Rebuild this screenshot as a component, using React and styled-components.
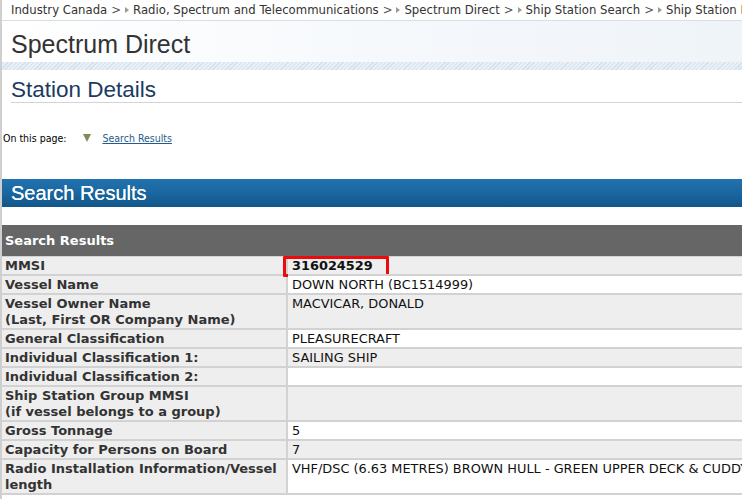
import React from "react";
import styled, { createGlobalStyle } from "styled-components";

const Global = createGlobalStyle`
  html, body { margin: 0; padding: 0; background: #fff; overflow: hidden; }
  body { width: 742px; height: 499px; }
`;

const Page = styled.div`
  width: 820px;
  border-left: 2px solid #cfcfcf;
  min-height: 499px;
  box-sizing: border-box;
`;

const Breadcrumb = styled.nav`
  height: 20px;
  padding-left: 9px;
  display: flex;
  align-items: center;
  gap: 4px;
  font-family: "DejaVu Sans", Verdana, sans-serif;
  font-size: 11.7px;
  color: #333;
  white-space: nowrap;
  border-bottom: 1px solid #d6dee8;
`;

const Crumb = styled.span``;

const Sep = styled.span`
  display: inline-flex;
  align-items: center;
  gap: 4px;
  color: #555;
`;

const Chevron = styled.span`
  display: inline-block;
  width: 0;
  height: 0;
  border-top: 3px solid transparent;
  border-bottom: 3px solid transparent;
  border-left: 4px solid #9a9a9a;
`;

const Banner = styled.header`
  height: 41px;
  box-sizing: border-box;
  padding: 5px 0 0 9px;
  display: flex;
  align-items: center;
  background: linear-gradient(to right, #ffffff 0%, #f3f7fb 60%, #eef3f8 100%);
  font-family: "Liberation Sans", Arial, sans-serif;
  font-size: 25px;
  color: #333;
`;

const Stripes = styled.div`
  height: 8px;
  background-color: #e3ecf5;
  background-image: repeating-linear-gradient(
    -45deg,
    #d3e1ee 0px,
    #d3e1ee 1px,
    #e8eff6 1px,
    #e8eff6 3px
  );
`;

const PageTitle = styled.h1`
  margin: 8px 0 0 9px;
  padding: 0;
  font-family: "Liberation Sans", Arial, sans-serif;
  font-weight: normal;
  font-size: 22.5px;
  line-height: 24px;
  color: #1b3b5f;
  border-bottom: 1px solid #d4d4d4;
`;

const OnPage = styled.div`
  margin-top: 29px;
  padding-left: 1px;
  display: flex;
  align-items: center;
  font-family: "DejaVu Sans Condensed", "DejaVu Sans", Tahoma, sans-serif;
  font-size: 10.5px;
  color: #000;
`;

const Triangle = styled.span`
  display: inline-block;
  margin: 0 11px 0 17px;
  width: 0;
  height: 0;
  border-left: 4px solid transparent;
  border-right: 4px solid transparent;
  border-top: 8px solid #86875f;
`;

const Link = styled.a`
  color: #1f5d8c;
  text-decoration: underline;
`;

const SectionBar = styled.h2`
  margin: 35px 0 0;
  height: 28px;
  padding-left: 9px;
  display: flex;
  align-items: center;
  background: linear-gradient(to bottom, #2373ae 0%, #1a66a0 50%, #125688 100%);
  font-family: "Liberation Sans", Arial, sans-serif;
  font-weight: normal;
  font-size: 20px;
  color: #fff;
  text-shadow: 0 0 0.6px #fff;
`;

const Table = styled.div`
  margin-top: 18px;
  display: grid;
  grid-template-columns: 286px 1fr;
  border-bottom: 2px solid #d2d2d2;
`;

const TableHead = styled.div`
  grid-column: 1 / -1;
  height: 31px;
  padding-left: 3px;
  display: flex;
  align-items: center;
  background: #666;
  font-family: "DejaVu Sans", Verdana, sans-serif;
  font-weight: bold;
  font-size: 13px;
  color: #fff;
`;

const Label = styled.div`
  padding: 1px 3px 0;
  background: #eeeeee;
  border-top: 2px solid #d2d2d2;
  border-right: 2px solid #d2d2d2;
  font-family: "DejaVu Sans", Verdana, sans-serif;
  font-weight: bold;
  font-size: 13px;
  line-height: 16px;
  color: #333;
  white-space: nowrap;
  ${(p) => p.$first && "border-top: 1px solid #d2d2d2;"}
`;

const Value = styled.div`
  position: relative;
  padding: 1px 4px 0;
  background: ${(p) => (p.$shaded ? "#eeeeee" : "#ffffff")};
  border-top: 2px solid #d2d2d2;
  font-family: "DejaVu Sans", Verdana, sans-serif;
  font-weight: ${(p) => (p.$bold ? "bold" : "normal")};
  font-size: 12.9px;
  line-height: 16px;
  color: #111;
  white-space: nowrap;
  ${(p) => p.$first && "border-top: 1px solid #d2d2d2;"}
`;

const Highlight = styled.span`
  position: absolute;
  left: -5px;
  top: -1px;
  width: 100px;
  height: 15px;
  border: 3px solid #ee0a0a;
  border-radius: 1px;
  pointer-events: none;
`;

const rows = [
  { label: "MMSI", value: "316024529", bold: true, mark: true },
  { label: "Vessel Name", value: "DOWN NORTH (BC1514999)" },
  { label: ["Vessel Owner Name", "(Last, First OR Company Name)"], value: "MACVICAR, DONALD" },
  { label: "General Classification", value: "PLEASURECRAFT" },
  { label: "Individual Classification 1:", value: "SAILING SHIP" },
  { label: "Individual Classification 2:", value: "" },
  { label: ["Ship Station Group MMSI", "(if vessel belongs to a group)"], value: "" },
  { label: "Gross Tonnage", value: "5" },
  { label: "Capacity for Persons on Board", value: "7" },
  {
    label: ["Radio Installation Information/Vessel", "length"],
    value: "VHF/DSC (6.63 METRES) BROWN HULL - GREEN UPPER DECK & CUDDY CABIN",
  },
];

const crumbs = [
  "Industry Canada",
  "Radio, Spectrum and Telecommunications",
  "Spectrum Direct",
  "Ship Station Search",
  "Ship Station Details",
];

export default function App() {
  return (
    <>
      <Global />
      <Page>
        <Breadcrumb>
          {crumbs.map((c, i) => (
            <React.Fragment key={c}>
              {i > 0 && (
                <Sep>
                  &gt; <Chevron />
                </Sep>
              )}
              <Crumb>{c}</Crumb>
            </React.Fragment>
          ))}
        </Breadcrumb>
        <Banner>Spectrum Direct</Banner>
        <Stripes />
        <PageTitle>Station Details</PageTitle>
        <OnPage>
          On this page:
          <Triangle />
          <Link href="#results">Search Results</Link>
        </OnPage>
        <SectionBar id="results">Search Results</SectionBar>
        <Table>
          <TableHead>Search Results</TableHead>
          {rows.map((r, i) => (
            <React.Fragment key={i}>
              <Label $first={i === 0}>
                {Array.isArray(r.label)
                  ? r.label.map((l, j) => <div key={j}>{l}</div>)
                  : r.label}
              </Label>
              <Value $first={i === 0} $shaded={i % 2 === 0} $bold={r.bold}>
                {r.value || "\u00a0"}
                {r.mark && <Highlight />}
              </Value>
            </React.Fragment>
          ))}
        </Table>
      </Page>
    </>
  );
}
